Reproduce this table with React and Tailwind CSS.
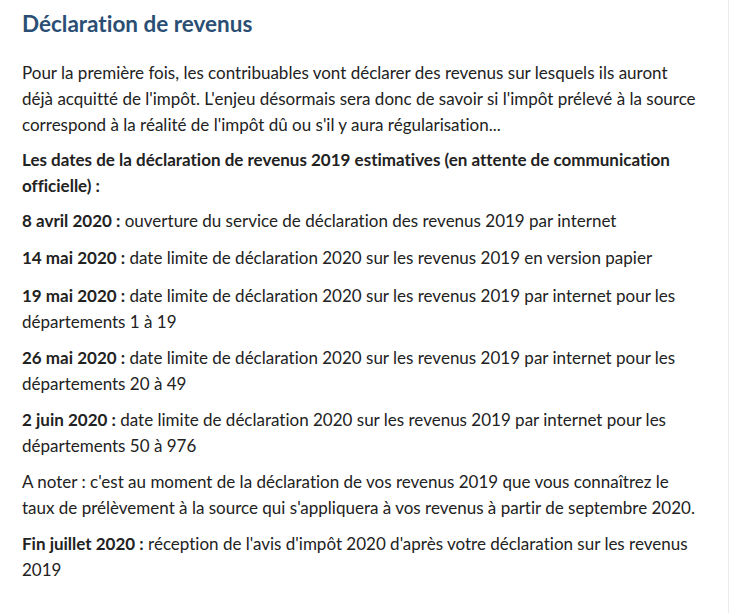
import React from 'react'

const dates = [
  { label: '8 avril 2020 :', text: 'ouverture du service de déclaration des revenus 2019 par internet', gap: 'mb-[11px]' },
  { label: '14 mai 2020 :', text: 'date limite de déclaration 2020 sur les revenus 2019 en version papier', gap: 'mb-[12px]' },
  { label: '19 mai 2020 :', text: 'date limite de déclaration 2020 sur les revenus 2019 par internet pour les départements 1 à 19', gap: 'mb-[10px]' },
  { label: '26 mai 2020 :', text: 'date limite de déclaration 2020 sur les revenus 2019 par internet pour les départements 20 à 49', gap: 'mb-[10px]' },
  { label: '2 juin 2020 :', text: 'date limite de déclaration 2020 sur les revenus 2019 par internet pour les départements 50 à 976', gap: 'mb-[10px]' },
]

const App = () => {
  return (
    <div className="w-[729px] h-[613px] bg-white border-r border-[#ececec] font-['Lato','Liberation_Sans',sans-serif] text-[17px] leading-[26px] text-[#222] [font-variant-ligatures:none]">
      <div className="pl-[22px] pr-[29px] pt-[8px]">
        <h2 className="text-[22.5px] leading-[32px] font-bold text-[#2b4f74] mb-[20px]">Déclaration de revenus</h2>

        <p className="mb-[9px]">
          Pour la première fois, les contribuables vont déclarer des revenus sur lesquels ils auront déjà acquitté de l'impôt. L'enjeu désormais sera donc de savoir si l'impôt prélevé à la source correspond à la réalité de l'impôt dû ou s'il y aura régularisation...
        </p>

        <p className="mb-[9px] font-bold">
          Les dates de la déclaration de revenus 2019 estimatives (en attente de communication officielle) :
        </p>

        {dates.map(d => (
          <p key={d.label} className={d.gap}>
            <strong className="font-bold">{d.label}</strong> {d.text}
          </p>
        ))}

        <p className="mb-[10px]">
          A noter : c'est au moment de la déclaration de vos revenus 2019 que vous connaîtrez le taux de prélèvement à la source qui s'appliquera à vos revenus à partir de septembre 2020.
        </p>

        <p className="mb-[10px]">
          <strong className="font-bold">Fin juillet 2020 :</strong> réception de l'avis d'impôt 2020 d'après votre déclaration sur les revenus 2019
        </p>
      </div>
    </div>
  )
}

export default App
